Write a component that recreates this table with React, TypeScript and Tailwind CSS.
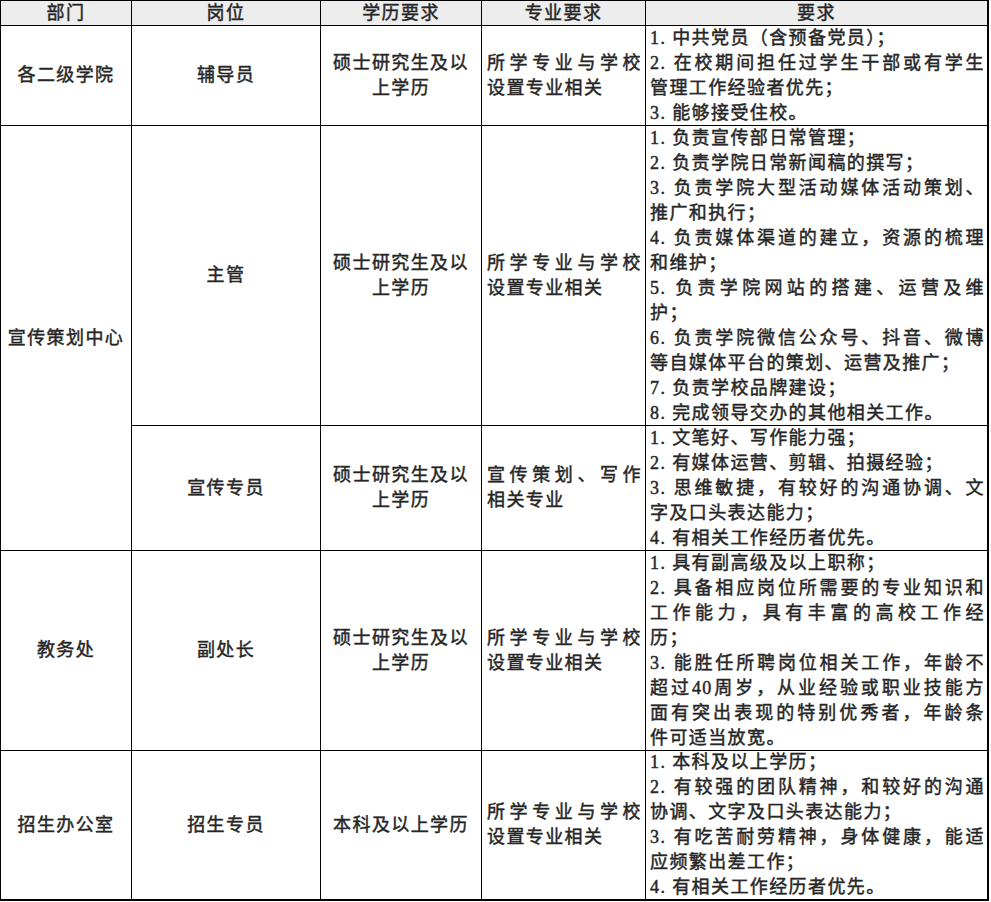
import React from "react";

type Line = { t: string; j?: boolean };

const c3a: Line[] = [{ t: "硕士研究生及以" }, { t: "上学历" }];
const c4a: Line[] = [{ t: "所学专业与学校", j: true }, { t: "设置专业相关" }];

const r1: Line[] = [
  { t: "1. 中共党员（含预备党员）；" },
  { t: "2. 在校期间担任过学生干部或有学生", j: true },
  { t: "管理工作经验者优先；" },
  { t: "3. 能够接受住校。" },
];
const r2: Line[] = [
  { t: "1. 负责宣传部日常管理；" },
  { t: "2. 负责学院日常新闻稿的撰写；" },
  { t: "3. 负责学院大型活动媒体活动策划、", j: true },
  { t: "推广和执行；" },
  { t: "4. 负责媒体渠道的建立，资源的梳理", j: true },
  { t: "和维护；" },
  { t: "5. 负责学院网站的搭建、运营及维", j: true },
  { t: "护；" },
  { t: "6. 负责学院微信公众号、抖音、微博", j: true },
  { t: "等自媒体平台的策划、运营及推广；" },
  { t: "7. 负责学校品牌建设；" },
  { t: "8. 完成领导交办的其他相关工作。" },
];
const r3: Line[] = [
  { t: "1. 文笔好、写作能力强；" },
  { t: "2. 有媒体运营、剪辑、拍摄经验；" },
  { t: "3. 思维敏捷，有较好的沟通协调、文", j: true },
  { t: "字及口头表达能力；" },
  { t: "4. 有相关工作经历者优先。" },
];
const r4: Line[] = [
  { t: "1. 具有副高级及以上职称；" },
  { t: "2. 具备相应岗位所需要的专业知识和", j: true },
  { t: "工作能力，具有丰富的高校工作经", j: true },
  { t: "历；" },
  { t: "3. 能胜任所聘岗位相关工作，年龄不", j: true },
  { t: "超过40周岁，从业经验或职业技能方", j: true },
  { t: "面有突出表现的特别优秀者，年龄条", j: true },
  { t: "件可适当放宽。" },
];
const r5: Line[] = [
  { t: "1. 本科及以上学历；" },
  { t: "2. 有较强的团队精神，和较好的沟通", j: true },
  { t: "协调、文字及口头表达能力；" },
  { t: "3. 有吃苦耐劳精神，身体健康，能适", j: true },
  { t: "应频繁出差工作；" },
  { t: "4. 有相关工作经历者优先。" },
];

function Lines({ lines, center }: { lines: Line[]; center?: boolean }) {
  return (
    <>
      {lines.map((l, i) =>
        l.j ? (
          <div key={i} className="text-justify [text-align-last:justify]">
            {l.t}
          </div>
        ) : (
          <div key={i} className={"whitespace-nowrap " + (center ? "text-center" : "text-left")}>
            {l.t}
          </div>
        )
      )}
    </>
  );
}

function Center({ children, className = "" }: { children: React.ReactNode; className?: string }) {
  return (
    <div className={"bg-white flex flex-col items-center justify-center text-center " + className}>
      {children}
    </div>
  );
}

function LeftCell({ lines, className = "" }: { lines: Line[]; className?: string }) {
  return (
    <div className={"bg-white flex flex-col justify-center pl-[5px] pr-[3px] " + className}>
      <Lines lines={lines} />
    </div>
  );
}

function ReqCell({ lines }: { lines: Line[] }) {
  return (
    <div className="bg-white flex flex-col justify-center pl-[4px] pr-[2px] overflow-visible">
      <Lines lines={lines} />
    </div>
  );
}

export default function App() {
  return (
    <div className="w-[991px] h-[902px] bg-white">
      <div
        className="grid w-[989px] gap-[1px] bg-black pt-[1px] pl-[1px] pr-[2px] pb-[2px] text-[18px] leading-[25px] tracking-[1.4px] font-normal text-[#262626] [-webkit-text-stroke:0.45px_#262626]"
        style={{
          fontFamily: '"Liberation Serif", "Noto Sans CJK SC", serif',
          gridTemplateColumns: "130px 188px 160px 163px 341px",
          gridTemplateRows: "24px 99px 299px 124px 199px 148px",
        }}
      >
        <div className="bg-[#ededed] flex items-center justify-center">部门</div>
        <div className="bg-[#ededed] flex items-center justify-center">岗位</div>
        <div className="bg-[#ededed] flex items-center justify-center">学历要求</div>
        <div className="bg-[#ededed] flex items-center justify-center">专业要求</div>
        <div className="bg-[#ededed] flex items-center justify-center">要求</div>

        <Center>各二级学院</Center>
        <Center>辅导员</Center>
        <Center><Lines lines={c3a} center /></Center>
        <LeftCell lines={c4a} />
        <ReqCell lines={r1} />

        <Center className="row-span-2">宣传策划中心</Center>
        <Center>主管</Center>
        <Center><Lines lines={c3a} center /></Center>
        <LeftCell lines={c4a} />
        <ReqCell lines={r2} />

        <Center>宣传专员</Center>
        <Center><Lines lines={c3a} center /></Center>
        <LeftCell lines={[{ t: "宣传策划、写作", j: true }, { t: "相关专业" }]} />
        <ReqCell lines={r3} />

        <Center>教务处</Center>
        <Center>副处长</Center>
        <Center><Lines lines={c3a} center /></Center>
        <LeftCell lines={c4a} />
        <ReqCell lines={r4} />

        <Center>招生办公室</Center>
        <Center>招生专员</Center>
        <Center><Lines lines={[{ t: "本科及以上学历" }]} center /></Center>
        <LeftCell lines={c4a} />
        <ReqCell lines={r5} />
      </div>
    </div>
  );
}
